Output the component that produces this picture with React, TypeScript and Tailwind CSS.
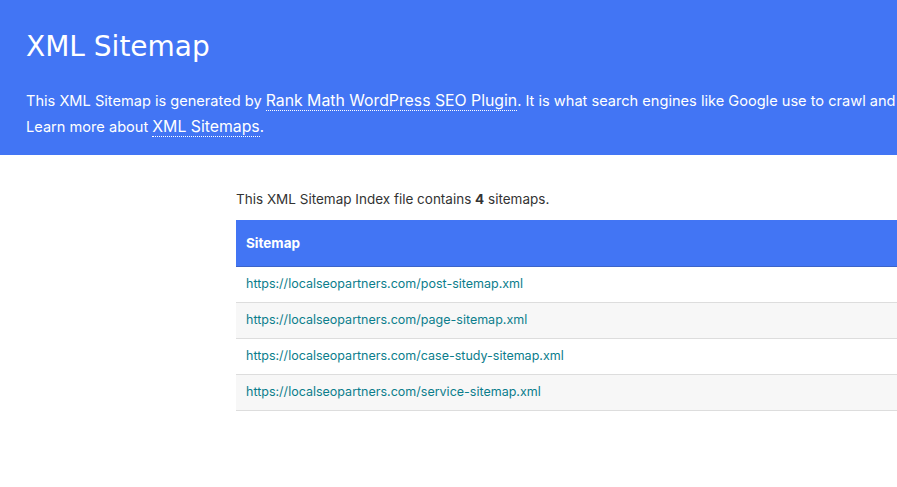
const sitemaps = [
  "https://localseopartners.com/post-sitemap.xml",
  "https://localseopartners.com/page-sitemap.xml",
  "https://localseopartners.com/case-study-sitemap.xml",
  "https://localseopartners.com/service-sitemap.xml",
];

export default function App() {
  return (
    <div className="w-[897px] h-[487px] overflow-hidden bg-white font-['Inter',sans-serif]">
      <div className="bg-[#4275f4] h-[155px] px-[26px] pt-[28px] text-white">
        <h1 className="text-[28px] leading-[38px] font-['DejaVu_Sans',sans-serif]">XML Sitemap</h1>
        <p className="mt-[22px] text-[14.6px] leading-[26px] whitespace-nowrap">
          This XML Sitemap is generated by{" "}
          <a className="text-[15.8px] border-b border-dotted border-white">Rank Math WordPress SEO Plugin</a>. It is what search
          engines like Google use to crawl and retrieve the contents of your website.
          <br />
          Learn more about <a className="text-[15.8px] border-b border-dotted border-white">XML Sitemaps</a>.
        </p>
      </div>
      <div className="ml-[236px] w-[900px] pt-[34px]">
        <p className="text-[13.5px] leading-[20px] text-[#333]">
          This XML Sitemap Index file contains <strong>4</strong> sitemaps.
        </p>
        <table className="mt-[11px] w-full border-collapse text-[12.5px]">
          <thead>
            <tr className="bg-[#4275f4] text-white">
              <th className="h-[46px] px-[10px] text-left font-bold text-[13.5px] border-b border-[#3c64c8]">Sitemap</th>
            </tr>
          </thead>
          <tbody>
            {sitemaps.map((url, i) => (
              <tr key={url} className={i % 2 === 1 ? "bg-[#f7f7f7]" : "bg-white"}>
                <td className="h-[36px] px-[10px] border-b border-[#dddddd]">
                  <a className="text-[#0b7d8c]">{url}</a>
                </td>
              </tr>
            ))}
          </tbody>
        </table>
      </div>
    </div>
  );
}
